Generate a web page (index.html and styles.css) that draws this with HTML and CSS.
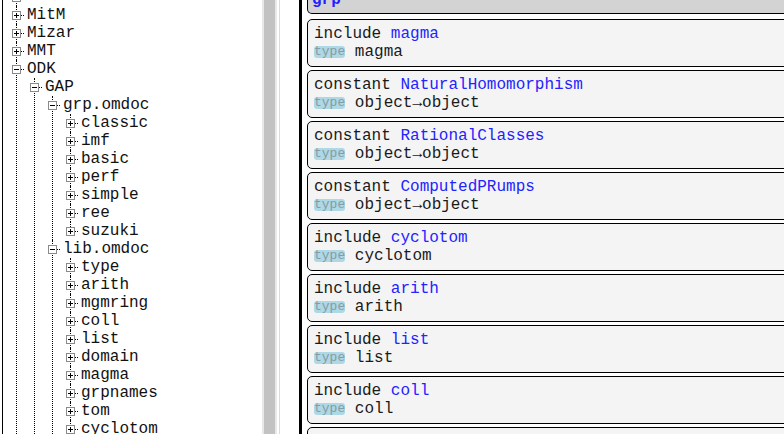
FILE: index.html
```html
<!DOCTYPE html>
<html lang="en">
<head>
<meta charset="utf-8">
<title>MathHub – grp</title>
<link rel="stylesheet" href="styles.css">
</head>
<body>
<div class="app">
  <nav class="tree-panel">
    <ul class="tree root">
      <li><div class="row"><span class="box plus"></span><span class="stub"></span></div></li>
      <li><div class="row"><span class="box plus"></span><span class="stub"></span><span class="label">MitM</span></div></li>
      <li><div class="row"><span class="box plus"></span><span class="stub"></span><span class="label">Mizar</span></div></li>
      <li><div class="row"><span class="box plus"></span><span class="stub"></span><span class="label">MMT</span></div></li>
      <li><div class="row"><span class="box minus"></span><span class="stub"></span><span class="label">ODK</span></div>
        <ul class="tree">
          <li><div class="row"><span class="box minus"></span><span class="stub"></span><span class="label">GAP</span></div>
            <ul class="tree">
              <li><div class="row"><span class="box minus"></span><span class="stub"></span><span class="label">grp.omdoc</span></div>
                <ul class="tree">
                  <li><div class="row"><span class="box plus"></span><span class="stub"></span><span class="label">classic</span></div></li>
                  <li><div class="row"><span class="box plus"></span><span class="stub"></span><span class="label">imf</span></div></li>
                  <li><div class="row"><span class="box plus"></span><span class="stub"></span><span class="label">basic</span></div></li>
                  <li><div class="row"><span class="box plus"></span><span class="stub"></span><span class="label">perf</span></div></li>
                  <li><div class="row"><span class="box plus"></span><span class="stub"></span><span class="label">simple</span></div></li>
                  <li><div class="row"><span class="box plus"></span><span class="stub"></span><span class="label">ree</span></div></li>
                  <li class="last"><div class="row"><span class="box plus"></span><span class="stub"></span><span class="label">suzuki</span></div></li>
                </ul>
              </li>
              <li><div class="row"><span class="box minus"></span><span class="stub"></span><span class="label">lib.omdoc</span></div>
                <ul class="tree">
                  <li><div class="row"><span class="box plus"></span><span class="stub"></span><span class="label">type</span></div></li>
                  <li><div class="row"><span class="box plus"></span><span class="stub"></span><span class="label">arith</span></div></li>
                  <li><div class="row"><span class="box plus"></span><span class="stub"></span><span class="label">mgmring</span></div></li>
                  <li><div class="row"><span class="box plus"></span><span class="stub"></span><span class="label">coll</span></div></li>
                  <li><div class="row"><span class="box plus"></span><span class="stub"></span><span class="label">list</span></div></li>
                  <li><div class="row"><span class="box plus"></span><span class="stub"></span><span class="label">domain</span></div></li>
                  <li><div class="row"><span class="box plus"></span><span class="stub"></span><span class="label">magma</span></div></li>
                  <li><div class="row"><span class="box plus"></span><span class="stub"></span><span class="label">grpnames</span></div></li>
                  <li><div class="row"><span class="box plus"></span><span class="stub"></span><span class="label">tom</span></div></li>
                  <li><div class="row"><span class="box plus"></span><span class="stub"></span><span class="label">cyclotom</span></div></li>
                  <li><div class="row"><span class="box plus"></span><span class="stub"></span><span class="label">ring</span></div></li>
                </ul>
              </li>
            </ul>
          </li>
        </ul>
      </li>
    </ul>
  </nav>

  <div class="gutter">
    <span class="track-edge"></span>
    <span class="thumb"></span>
    <span class="track-edge"></span>
    <span class="gap"></span>
    <span class="rule"></span>
  </div>
  <div class="divider"></div>

  <main class="content">
    <div class="decls">
      <div class="module-head">grp</div>
      <div class="card"><div><span class="kw">include</span> <span class="name">magma</span></div><div><span class="badge">type</span> magma</div></div>
      <div class="card"><div><span class="kw">constant</span> <span class="name">NaturalHomomorphism</span></div><div><span class="badge">type</span> object→object</div></div>
      <div class="card"><div><span class="kw">constant</span> <span class="name">RationalClasses</span></div><div><span class="badge">type</span> object→object</div></div>
      <div class="card"><div><span class="kw">constant</span> <span class="name">ComputedPRumps</span></div><div><span class="badge">type</span> object→object</div></div>
      <div class="card"><div><span class="kw">include</span> <span class="name">cyclotom</span></div><div><span class="badge">type</span> cyclotom</div></div>
      <div class="card"><div><span class="kw">include</span> <span class="name">arith</span></div><div><span class="badge">type</span> arith</div></div>
      <div class="card"><div><span class="kw">include</span> <span class="name">list</span></div><div><span class="badge">type</span> list</div></div>
      <div class="card"><div><span class="kw">include</span> <span class="name">coll</span></div><div><span class="badge">type</span> coll</div></div>
      <div class="card"><div><span class="kw">include</span> <span class="name">domain</span></div><div><span class="badge">type</span> domain</div></div>
    </div>
  </main>
</div>
</body>
</html>
```

FILE: styles.css
```css
* { box-sizing: border-box; }

html, body {
  margin: 0;
  padding: 0;
  height: 434px;
  overflow: hidden;
  background: #ffffff;
}

body {
  font-family: "Liberation Mono", "DejaVu Sans Mono", monospace;
  font-size: 16px;
  color: #1a1a1a;
}

.app {
  display: flex;
  height: 434px;
  overflow: hidden;
}

/* ---------- tree ---------- */
.tree-panel {
  flex: none;
  width: 260px;
  margin-left: 2px;
  border-left: 1px solid #000;
  overflow: hidden;
}

.tree {
  list-style: none;
  margin: 0 0 0 17px;
  padding: 0;
}

.tree.root {
  margin: -12px 0 0 13px;
}

.tree li {
  border-left: 1px dotted #000;
}

.tree li.last {
  border-left-color: transparent;
  background: repeating-linear-gradient(to bottom, #000 0 1px, transparent 1px 2px) left top / 1px 9px no-repeat;
  background-origin: border-box;
}

.row {
  display: flex;
  align-items: center;
  height: 18px;
  line-height: 18px;
  white-space: nowrap;
}

.box {
  flex: none;
  width: 9px;
  height: 9px;
  margin-left: -5px;
  border: 1px solid #8a8a8a;
  background:
    linear-gradient(#000, #000) center / 5px 1px no-repeat,
    #fff;
}

.box.plus {
  background:
    linear-gradient(#000, #000) center / 5px 1px no-repeat,
    linear-gradient(#000, #000) center / 1px 5px no-repeat,
    #fff;
}

.stub {
  flex: none;
  width: 3px;
  height: 0;
  border-top: 1px dotted #000;
}

.label {
  margin-left: 3px;
  color: #111;
}

/* ---------- gutter / splitter ---------- */
.gutter {
  flex: none;
  display: flex;
  width: 37px;
}

.track-edge {
  width: 2px;
  background: #e8e8e8;
}

.thumb {
  width: 11px;
  background: #c2c2c2;
}

.gap {
  width: 2px;
}

.rule {
  width: 1px;
  background: #dadada;
}

.divider {
  flex: none;
  width: 3px;
  background: #000;
}

/* ---------- content ---------- */
.content {
  flex: 1;
  min-width: 0;
  overflow: hidden;
  padding-left: 5px;
}

.decls {
  width: 540px;
}

.module-head {
  margin-top: -9px;
  margin-bottom: 5px;
  padding: 0 4px 4px;
  line-height: 18px;
  background: #d3d3d3;
  border: 1px solid #000;
  border-top: none;
  border-radius: 0 0 5px 5px;
  font-weight: bold;
  color: #1f1fff;
}

.card {
  margin-bottom: 3px;
  padding: 5px 6px;
  line-height: 18px;
  background: #f4f4f4;
  border: 1px solid #000;
  border-radius: 5px;
  white-space: nowrap;
}

.kw {
  color: #1a1a1a;
}

.name {
  color: #2323ff;
}

.badge {
  display: inline-block;
  font-size: 13px;
  line-height: 12px;
  background: #add8e6;
  color: #8a9aa2;
  border-radius: 3px;
  vertical-align: 1px;
}
```
